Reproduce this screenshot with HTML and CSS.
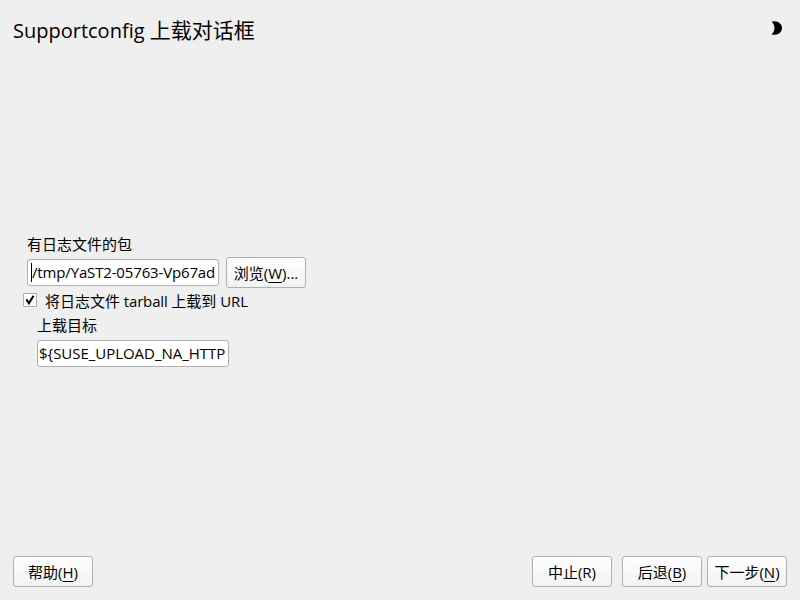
FILE: index.html
```html
<!DOCTYPE html>
<html lang="zh-CN">
<head>
<meta charset="utf-8">
<title>Supportconfig</title>
<link rel="stylesheet" href="styles.css">
</head>
<body>
<div class="dialog">
  <header class="header">
    <h1 class="title"><span class="title-latin">Supportconfig </span>上载对话框</h1>
    <svg class="moon" width="12" height="14" viewBox="0 0 12 14"><path d="M.5.8C5-1.2 11 1.8 11 7S5 15.2.5 13.2C4.5 10.5 4.5 3.5.5.8Z"/></svg>
  </header>
  <main class="content">
    <label class="label">有日志文件的包</label>
    <div class="file-row">
      <div class="field path-field"><span class="caret"></span>/tmp/YaST2-05763-Vp67ad</div>
      <button class="button">浏览(<u>W</u>)...</button>
    </div>
    <div class="check-row">
      <span class="checkbox"><svg width="12" height="12" viewBox="0 0 12 12"><path d="M2.4 5.4L4.9 9.3L9.5 1.8"/></svg></span>
      <span class="check-text">将日志文件<span class="latin"> tarball </span>上载到<span class="latin"> </span>URL</span>
    </div>
    <div class="target">
      <label class="label target-label">上载目标</label>
      <div class="field target-field">${SUSE_UPLOAD_NA_HTTP</div>
    </div>
  </main>
  <footer class="footer">
    <button class="button">帮助(<u>H</u>)</button>
    <button class="button abort">中止(R)</button>
    <button class="button back">后退(<u>B</u>)</button>
    <button class="button">下一步(<u>N</u>)</button>
  </footer>
</div>
</body>
</html>
```
FILE: styles.css
```css
* { box-sizing: border-box; }
body {
  margin: 0;
  background: #efefef;
  color: #000;
  font: 15px/20px "Open Sans", "Noto Sans CJK SC", sans-serif;
}
.dialog {
  display: flex;
  flex-direction: column;
  width: 800px;
  height: 600px;
  padding: 16px 13px 13px;
  overflow: hidden;
}
.header {
  display: flex;
  justify-content: space-between;
  height: 218px;
}
.title {
  margin: 0;
  font-size: 21px;
  font-weight: 400;
  line-height: 29px;
  white-space: nowrap;
}
.title-latin { font-size: 20px; letter-spacing: 0; }
.moon { margin: 5px 4px 0 0; }
.content { flex: 1; padding-left: 14px; }
.label { display: block; height: 23px; line-height: 20px; white-space: nowrap; }
.file-row { display: flex; align-items: center; gap: 7px; height: 31px; }
.field {
  display: flex;
  width: 192px;
  height: 27px;
  padding: 0 2px 0 3px;
  border: 1px solid #b0b0b0;
  border-radius: 3px;
  background: #fff;
  line-height: 25px;
  white-space: nowrap;
  overflow: hidden;
}
.path-field { letter-spacing: -0.15px; }
.caret { width: 1px; height: 19px; margin-top: 3px; background: #000; flex: none; }
.button {
  display: flex;
  align-items: center;
  justify-content: center;
  width: 80px;
  height: 31px;
  padding: 1px 0 0;
  border: 1px solid #b0b0b0;
  border-radius: 3px;
  background: linear-gradient(#fefefe, #f2f2f2);
  color: #000;
  font: inherit;
  white-space: nowrap;
}
.button u { text-underline-offset: 3px; text-decoration-thickness: 1px; }
.check-row { display: flex; align-items: center; gap: 8px; height: 26px; margin-left: -4px; }
.checkbox { width: 14px; height: 14px; margin-top: -2px; border: 1px solid #b0b0b0; background: #fff; display: flex; }
.checkbox path { fill: none; stroke: #000; stroke-width: 2; }
.latin { letter-spacing: -0.15px; }
.target { padding-left: 10px; }
.target-label { height: 26px; line-height: 22px; }
.target-field { padding-left: 1px; letter-spacing: -0.03px; }
.footer { display: flex; }
.abort { margin-left: auto; }
.back { margin: 0 5px 0 10px; }
```
